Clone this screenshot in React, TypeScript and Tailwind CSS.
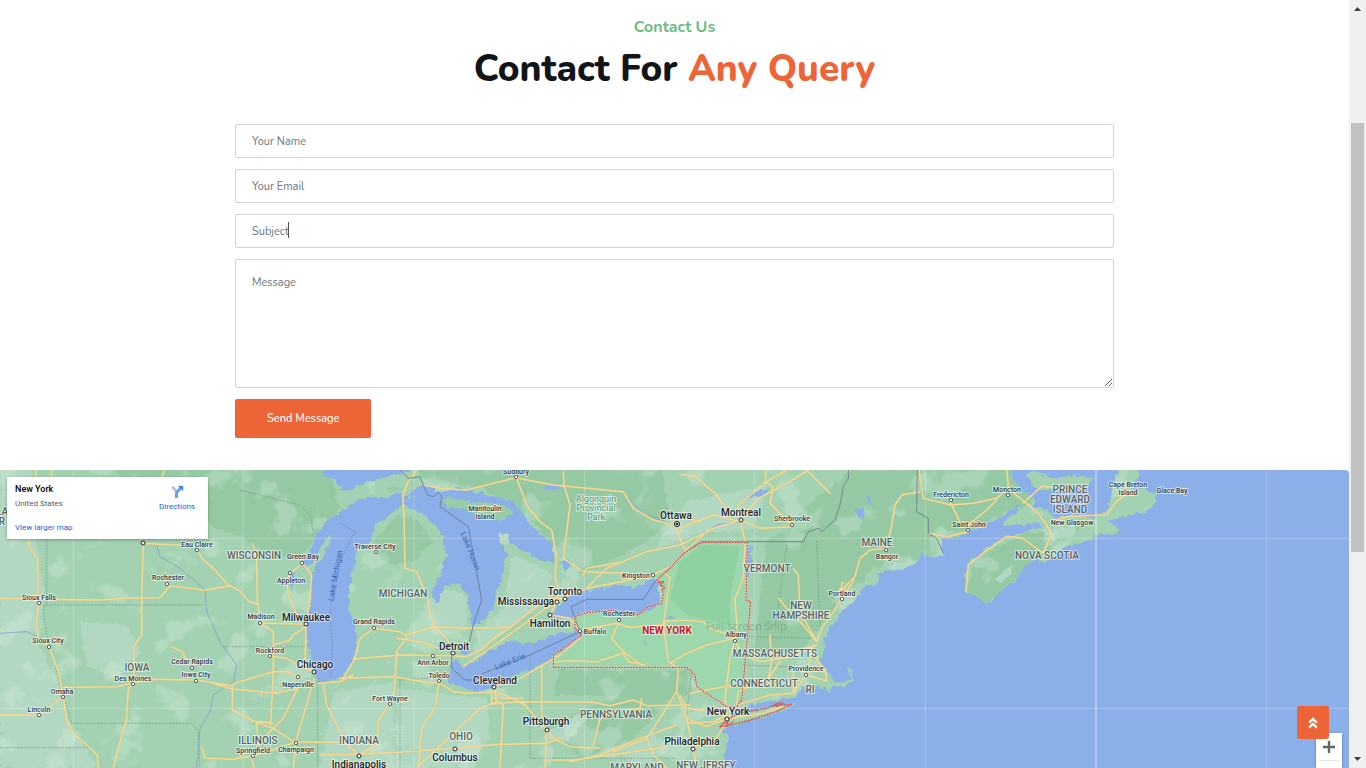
import React from "react";

type Label = [x: number, y: number, text: string];
type Dot = [x: number, y: number];

/* Drawn at three units per map pixel, with its origin at the map's upper left. */
const LAND =
  "M-20 -20L3030 -20L3032 20L3045 54L3080 89L3110 104L3095 130L3140 135L3165 158L3220 150L3280 159L3320 139L3330 99L3365 -20L3425 -20L3405 50L3395 80L3430 72L3470 92L3468 112L3440 139L3380 154L3330 168L3340 180L3365 190L3345 205L3300 210L3260 226L3190 249L3135 294L3100 285L3070 309L3040 350L2990 389L2980 405L2955 417L2935 392L2900 384L2896 329L2915 284L2960 249L3020 214L3060 206L3110 189L3130 179L3060 178L3010 184L3012 169L3050 149L3060 119L3030 139L2980 169L2910 199L2860 219L2820 215L2830 270L2800 279L2765 270L2740 299L2690 318L2660 312L2640 329L2630 364L2600 360L2580 384L2560 409L2525 439L2510 465L2490 489L2470 529L2475 559L2455 584L2490 629L2500 648L2530 650L2552 638L2540 609L2553 615L2558 648L2530 665L2500 663L2490 685L2470 669L2440 664L2425 679L2410 660L2395 685L2380 699L2280 709L2220 734L2210 754L2180 770L2160 794L2185 809L2170 879L2160 920L-20 920Z" +
  "M2170 790L2195 757L2240 745L2310 728L2385 718L2340 738L2270 762L2210 780Z" +
  "M3076 28L3100 18L3130 25L3150 42L3200 32L3285 40L3260 62L3200 82L3140 76L3100 65Z";

const LAKES =
  "M1240 92L1225 95L1210 85L1150 100L1110 95L1060 110L1020 140L985 160L960 195L938 240L925 270L908 294L925 305L950 270L975 225L995 205L985 245L955 290L935 330L930 400L918 480L925 550L945 620L955 650L990 655L1030 630L1060 585L1075 520L1055 450L1045 380L1058 310L1080 250L1105 235L1130 180L1170 150L1205 120Z" +
  "M1235 80L1275 55L1320 80L1370 72L1440 83L1540 110L1575 150L1600 190L1655 235L1665 290L1620 290L1580 260L1550 250L1520 210L1490 200L1520 270L1505 340L1490 400L1470 450L1440 475L1415 480L1405 400L1380 355L1340 360L1310 410L1290 390L1320 330L1338 270L1325 205L1275 150L1210 118Z" +
  "M960 0L970 30L1000 42L1025 75L1060 72L1100 50L1180 32L1230 20L1230 0Z" +
  "M1350 610L1362 585L1390 600L1430 585L1470 560L1520 530L1590 535L1660 510L1720 500L1745 498L1740 520L1700 550L1640 590L1590 615L1540 635L1500 665L1430 680L1375 665L1340 645Z" +
  "M1650 452L1672 430L1700 400L1760 377L1860 360L1900 372L1960 340L1975 355L1980 415L1920 448L1860 445L1800 437L1740 445L1715 460L1680 460Z" +
  "M1380 550L1400 540L1415 560L1390 570ZM1682 290L1710 282L1715 305L1695 320ZM1620 65L1680 58L1690 75L1640 72ZM870 310L885 330L872 380L865 345Z" +
  "M2245 240L2258 240L2252 300L2238 360L2240 290ZM2240 100L2260 82L2310 70L2290 92ZM2570 140L2590 125L2585 165ZM2600 90L2612 105L2620 125L2604 110ZM2690 70L2700 100L2696 105Z" +
  "M1990 457L2025 455L2020 463L1995 464ZM1928 500L1935 520L1945 545L1938 535Z";

const ISLANDS =
  "M1320 100L1360 98L1420 112L1510 120L1545 145L1500 168L1430 158L1395 130L1340 122ZM1170 60L1215 65L1200 80L1160 80Z";

const NEW_YORK =
  "M1725 490L1725 455L1760 443L1840 436L1915 450L1945 425L1985 415L1990 385L1982 350L1970 345L2005 315L2050 265L2105 233L2242 233L2238 405L2252 410L2240 540L2225 705L2210 725L2180 725L2120 685L2090 665L2085 630L2060 607L1660 607L1660 570L1745 510Z";

const LONG_ISLAND =
  "M2160 785L2180 765L2205 750L2240 740L2300 730L2340 712L2350 722L2375 717L2340 735L2270 760L2200 778Z";

const FORESTS =
  "M330 0L960 0L1000 50L1020 130L930 240L900 280L800 260L720 215L640 190L560 110L380 60ZM1240 0L1980 0L2010 160L1940 230L1750 330L1680 270L1590 160L1450 70L1280 50ZM1110 240L1190 150L1260 170L1300 230L1240 290L1160 300ZM1680 615L2060 615L2080 680L1990 710L1800 690L1660 690ZM2300 230L2450 100L2560 15L2760 15L2820 270L2620 310L2480 460L2400 560L2260 560ZM1640 780L1840 700L2010 700L1900 820L1740 880ZM2780 0L3030 0L3100 110L2900 200L2780 190ZM2900 380L2920 290L3060 210L3260 180L3100 290L2960 417Z";

const PLAINS =
  "M0 0L90 0L110 240L130 380L120 540L195 700L220 800L300 909L0 909ZM240 470L380 480L420 560L350 640L260 600ZM1190 670L1460 700L1470 820L1400 909L1190 909ZM1270 420L1350 370L1400 400L1400 500L1300 510ZM1540 270L1650 320L1660 400L1510 500L1420 580L1430 500L1510 430ZM1000 680L1180 650L1180 909L960 909ZM2060 110L2300 60L2260 190L2080 210L1960 260ZM1620 820L1700 760L1780 740L1700 830ZM1850 850L1960 810L2020 850L1900 909ZM3120 195L3230 180L3220 210L3160 225ZM2990 340L3020 310L3040 300L3030 330L3000 355Z";

const ROADS =
  // Plains and western lakes
  "M0 400L110 403L300 405L380 400L480 398L510 362L615 376L690 362L720 378L745 408L775 418L780 474L918 478" +
  "M85 222L90 250L113 280L115 400L110 480L115 520L147 546L175 620L190 695L200 770L220 805L260 840L292 870L295 909" +
  "M430 235L425 400L425 510L403 540L400 655L385 670L380 760L360 830L340 909" +
  "M190 667L350 665L400 653L440 643L590 645L695 662L720 650L820 620L860 620L895 636" +
  "M0 750L118 750L188 696M430 235L480 238L590 242M590 255L610 285L640 310L685 360M760 240L770 290L772 418" +
  "M908 294L872 325L860 345L865 390L890 450M908 294L935 330L930 400L918 478L915 600L942 622" +
  "M780 474L820 500L820 620L812 780M810 573L860 580L900 605L942 622M918 485L880 510L870 525L820 540" +
  "M697 662L697 735L765 770L820 790L885 832L1050 832M640 655L697 672L830 685L895 670M785 680L785 695" +
  "M942 640L905 770L887 832L880 909M895 665L850 760L800 810M755 768L820 775M770 770L775 840L759 872L700 883L615 880L605 845M887 832L759 874M755 880L762 909" +
  "M970 655L980 720L1020 800L1050 850M955 655L1020 650L1060 630M515 545L545 560L575 607M500 0L485 36M100 0L110 36M150 0L157 40" +
  // Michigan, Ohio, southern Ontario
  "M1250 15L1225 50L1208 90L1212 150L1215 310L1250 320L1282 400L1300 485L1340 520L1360 560" +
  "M1020 640L1180 635L1270 650L1320 655L1360 680L1400 685L1480 680M1122 490L1200 500L1220 510L1300 485L1400 490L1530 487" +
  "M1030 640L1065 580L1080 520L1122 490M1060 582L1200 570L1360 572L1400 575L1450 550L1480 520L1520 495L1590 440L1640 400L1696 400M1390 605L1440 570L1520 515L1650 420" +
  "M1220 515L1190 560L1182 690L1135 770L1130 840L1076 870L1020 820M1190 520L1260 530L1330 555" +
  "M1317 655L1305 730L1265 790L1255 909M960 870L1076 868L1200 862L1365 850L1500 838L1640 835L1680 820" +
  "M1483 667L1490 710L1440 730L1365 800L1250 909M1483 680L1540 700L1575 720L1640 795L1660 820L1710 845L1800 850" +
  "M1483 667L1560 640L1620 605L1680 570L1740 520M1625 605L1625 790M1483 700L1510 720L1500 909M1470 718L1560 710L1780 712L1830 722L1900 705L1940 722L2070 720M1475 690L1475 720M1500 700L1570 700" +
  "M1548 35L1580 120L1620 170L1655 195L1670 280L1665 340L1675 370L1670 410L1650 450L1710 460L1740 495" +
  "M1270 60L1320 70L1400 75L1548 38L1660 60L1870 80L1900 130L1960 165L2025 180M1690 20L1692 60L1710 120L1700 200L1690 280L1750 320L1870 325" +
  "M1640 430L1696 395L1760 370L1840 355L1960 330L2010 305L2060 255L2125 195L2222 165M1760 370L1820 310L1940 260L2040 240L2125 200M2025 180L2045 235L2060 260M1870 290L1760 310L1750 330" +
  // New York and Pennsylvania
  "M1740 495L1850 475L1890 487L1990 480L2000 468L2060 466L2110 470L2135 492L2205 515M1855 475L1835 520L1870 560L1925 600M1660 590L1720 587L1790 590L1870 565L1885 590L1935 600" +
  "M1990 325L2010 335L1990 480L2005 590L2035 610L2030 680L2060 760M2010 595L2060 565L2120 540L2205 520M1640 795L1635 909M1710 890L1800 870L1920 820L2030 780M1780 840L1800 760L1840 740L1920 730L1925 700M1640 885L1720 885L1900 860L2000 845M1940 820L1960 870L2000 909M2060 760L2120 785L2170 765M2060 760L2075 830L2090 909M2030 680L1980 760L1940 820L1840 860" +
  // New England and Quebec
  "M2222 165L2280 190L2375 185M2222 165L2275 100L2370 50L2425 15M2222 165L2215 120L2300 50L2360 15M2222 170L2235 230L2230 340L2205 400L2212 500L2205 525L2190 580L2175 700L2182 762" +
  "M2205 530L2230 570L2280 590L2380 575L2450 540M2380 310L2395 330L2400 440L2450 530M2335 400L2360 430L2410 480L2450 530M2450 530L2465 490L2500 440L2525 400L2560 350L2580 280L2610 255L2660 250L2675 180L2685 120L2705 90L2760 80" +
  "M2182 762L2210 720L2310 690L2380 685L2418 628L2440 540M2210 720L2215 680L2305 640L2340 590M2070 685L2170 665L2250 660M2040 28L2090 35L2120 65L2150 90L2180 130M2182 762L2290 745L2370 718M2182 762L2150 820L2080 850M2060 775L2140 770L2182 750M2040 690L2060 730L2182 745M2310 510L2315 590L2305 640M2380 600L2380 680M2350 570L2430 545L2455 580M2420 630L2480 648L2475 615L2440 570M2040 190L2140 150L2222 170M2040 150L2100 170M2425 20L2490 85M2300 15L2295 50L2320 65L2310 115L2375 180M2528 350L2520 380L2560 340" +
  // Maritimes
  "M2755 0L2770 100L2852 120L2920 115L2990 100L3023 70L3110 139L3140 179L3155 209L3130 264L3065 219L3020 214L2950 264L2905 299L2898 380M2785 205L2840 215L2905 200M2905 180L2960 135L2990 105M3150 169L3210 154L3320 149L3350 109L3390 79M3070 114L3125 64L3200 69M2850 110L2870 150L2880 175M3025 70L3020 0";

const BORDERS =
  "M1200 15L1225 40L1260 35L1282 90L1300 95L1315 82L1325 95L1320 125L1405 185L1445 405L1420 480L1408 530M1355 570L1355 610L1395 645L1430 645L1450 625L1590 570L1740 500L1725 460L1713 425L1760 403L1930 403L1965 350L2070 250L2105 230L2410 230L2425 200L2455 190L2465 200L2480 187L2505 165L2520 120L2530 65L2545 40L2545 0M2752 0L2750 140L2785 160L2785 205L2810 220L2830 265";

const STATE_LINES =
  "M140 222L140 420L130 430L140 510L175 640L215 775L575 775L595 800L600 909M130 420L615 420M0 848L270 848L280 860M670 545L920 545M953 650L953 909M720 75L820 100L900 120L930 150L940 200M1200 645L1200 909M1200 645L1350 635M1590 570L1590 880L2020 880M2230 600L2380 605M2245 515L2435 520M2360 240L2345 350L2325 480M2450 230L2460 490M2075 615L2060 750";

const RIVERS =
  "M470 240L480 275L540 310L580 345L615 375L620 440L660 530L710 600L700 650L640 690L630 740L600 790L590 909M0 505L80 500L135 525L150 560M2222 170L2150 180L2080 225M1870 85L1930 145L2025 180";

const majorCities: Label[] = [
  [306, 621, "Milwaukee"], [315, 668, "Chicago"], [359, 768, "Indianapolis"],
  [455, 761, "Columbus"], [454, 650, "Detroit"], [495, 684, "Cleveland"],
  [546, 725, "Pittsburgh"], [550, 627, "Hamilton"], [526, 605, "Mississauga"],
  [565, 595, "Toronto"], [676, 519, "Ottawa"], [741, 516, "Montreal"],
  [728, 715, "New York"], [692, 745, "Philadelphia"],
];

const towns: Label[] = [
  [197, 547, "Eau Claire"], [303, 559, "Green Bay"], [291, 583, "Appleton"],
  [168, 580, "Rochester"], [39, 600, "Sioux Falls"], [48, 643, "Sioux City"],
  [261, 619, "Madison"], [270, 653, "Rockford"], [192, 664, "Cedar Rapids"],
  [196, 677, "Iowa City"], [133, 681, "Des Moines"], [62, 694, "Omaha"],
  [39, 712, "Lincoln"], [298, 687, "Naperville"], [253, 753, "Springfield"],
  [296, 752, "Champaign"], [375, 549, "Traverse City"], [374, 624, "Grand Rapids"],
  [433, 665, "Ann Arbor"], [439, 678, "Toledo"], [390, 701, "Fort Wayne"],
  [516, 474, "Sudbury"], [485, 511, "Manitoulin"], [485, 519, "Island"],
  [636, 578, "Kingston"], [619, 616, "Rochester"], [595, 634, "Buffalo"],
  [736, 637, "Albany"], [792, 521, "Sherbrooke"], [887, 559, "Bangor"],
  [842, 596, "Portland"], [806, 671, "Providence"], [951, 497, "Fredericton"],
  [1007, 492, "Moncton"], [969, 527, "Saint John"], [1072, 525, "New Glasgow"],
  [1128, 487, "Cape Breton"], [1128, 495, "Island"], [1172, 493, "Glace Bay"],
];

const regions: Label[] = [
  [254, 559, "WISCONSIN"], [137, 671, "IOWA"], [258, 744, "ILLINOIS"],
  [359, 744, "INDIANA"], [403, 597, "MICHIGAN"], [461, 740, "OHIO"],
  [616, 718, "PENNSYLVANIA"], [637, 771, "MARYLAND"], [706, 769, "NEW JERSEY"],
  [767, 572, "VERMONT"], [801, 609, "NEW"], [801, 619, "HAMPSHIRE"],
  [775, 657, "MASSACHUSETTS"], [764, 687, "CONNECTICUT"], [810, 693, "RI"],
  [877, 546, "MAINE"], [1047, 559, "NOVA SCOTIA"], [1070, 493, "PRINCE"],
  [1070, 503, "EDWARD"], [1070, 513, "ISLAND"], [2, 515, "LA"], [2, 525, "R"],
];

const parkLabels: Label[] = [
  [596, 502, "Algonquin"], [596, 511, "Provincial"], [596, 520, "Park"],
];

const majorDots: Dot[] = [
  [306, 624], [314, 672], [359, 756], [455, 749], [453, 653], [494, 687],
  [547, 730], [550, 615], [557, 602], [565, 599], [741, 520], [727, 719], [693, 749], [143, 543],
];

const townDots: Dot[] = [
  [197, 550], [302, 563], [290, 573], [167, 584], [39, 603], [49, 647], [260, 623],
  [270, 656], [192, 668], [196, 681], [133, 684], [63, 697], [39, 715], [298, 677],
  [253, 756], [296, 743], [376, 552], [374, 628], [433, 656], [439, 681], [390, 704],
  [516, 477], [653, 575], [619, 620], [580, 631], [735, 641], [792, 525], [886, 550],
  [842, 599], [806, 675], [951, 500], [1008, 495], [968, 530],
];

function Labels({ items, className }: { items: Label[]; className: string }) {
  return (
    <g
      className={className}
      textAnchor="middle"
      stroke="#ffffff"
      strokeOpacity={0.6}
      strokeWidth={2}
      strokeLinejoin="round"
      paintOrder="stroke"
    >
      {items.map(([x, y, text], i) => (
        <text key={i} x={x} y={y}>
          {text}
        </text>
      ))}
    </g>
  );
}

function MapDrawing() {
  return (
    <svg
      className="block h-full w-full bg-[#8bafe9]"
      viewBox="0 470 1349 298"
      preserveAspectRatio="xMidYMin slice"
      role="img"
      aria-label="Map of New York and the north-eastern United States"
    >
      <defs>
        <clipPath id="land">
          <path d={LAND} />
        </clipPath>
        <filter id="coast" x="0" y="0" width="100%" height="100%">
          <feTurbulence type="fractalNoise" baseFrequency="0.05" numOctaves="3" seed="4" />
          <feDisplacementMap in="SourceGraphic" scale="22" xChannelSelector="R" yChannelSelector="G" />
        </filter>
        <filter id="terrain" x="0" y="0" width="100%" height="100%">
          <feTurbulence type="fractalNoise" baseFrequency="0.009" numOctaves="4" seed="11" />
          <feColorMatrix values="0 0 0 0 0.72  0 0 0 0 0.86  0 0 0 0 0.77  10 0 0 0 -5.9" />
        </filter>
      </defs>

      <g transform="translate(0 465) scale(0.333333)">
        <g filter="url(#coast)">
          <path d={LAND} fill="#a3d2b2" />
          <g clipPath="url(#land)">
            <path d={FORESTS} fill="#94c9a4" />
            <path d={PLAINS} fill="#b2d8c1" />
          </g>
        </g>
        <g clipPath="url(#land)">
          <rect y="15" width="4047" height="894" filter="url(#terrain)" opacity="0.3" />
        </g>
        <path d={NEW_YORK} fill="#9cd7ad" />
        <path d="M2105 240L2220 245L2190 390L2190 480L2060 450L2010 400L2040 290Z" fill="#90d1a4" />
        <g filter="url(#coast)">
          <path d={LAKES} fill="#8bafe9" />
          <path d={ISLANDS} fill="#98cba7" />
        </g>

        <path
          d="M220 15V909M729 15V909M1242 15V909M1754 15V909M2264 15V909M2776 15V909M3799 15V909M0 220H4047M0 730H4047"
          fill="none"
          stroke="#ffffff"
          strokeOpacity="0.25"
          strokeWidth="3"
        />
        <path d="M3288 15V909" stroke="#ffffff" strokeOpacity="0.5" strokeWidth="4" />

        <g fill="none" strokeLinejoin="round" strokeLinecap="round">
          <path d={RIVERS} stroke="#7f9fd0" strokeWidth="3" strokeOpacity="0.8" />
          <path d={STATE_LINES} stroke="#6f8f82" strokeWidth="2" strokeDasharray="3 6" />
          <path d={ROADS} stroke="#d3b76a" strokeWidth="6.5" strokeOpacity="0.45" />
          <path d={ROADS} stroke="#f4da96" strokeWidth="4.5" />
          <path d={BORDERS} stroke="#68788a" strokeWidth="2.5" />
          <path
            d="M1020 175L1065 200L1000 330L990 460L998 540L992 640"
            stroke="#6c86bb"
            strokeWidth="2"
            strokeDasharray="5 5"
          />
          <path d={NEW_YORK} stroke="#fbe3e3" strokeOpacity="0.5" strokeWidth="6" />
          <path d={NEW_YORK} stroke="#d5504b" strokeWidth="4" strokeDasharray="3 6" />
          <path d={LONG_ISLAND} stroke="#d5504b" strokeWidth="4" strokeDasharray="3 6" />
          <path
            d="M1975 352L1992 350L1980 360L1995 368L1985 376M2165 780L2185 770L2178 785L2200 770M2320 725L2335 715L2330 725L2350 715"
            stroke="#d5504b"
            strokeWidth="3"
          />
        </g>
      </g>

      <g fill="#ffffff" stroke="#4a4f52" strokeWidth="0.9">
        {townDots.map(([x, y], i) => (
          <circle key={i} cx={x} cy={y} r="1.7" />
        ))}
      </g>
      <g fill="#ffffff" stroke="#202124" strokeWidth="1">
        {majorDots.map(([x, y], i) => (
          <circle key={i} cx={x} cy={y} r="2" />
        ))}
        <circle cx="677" cy="524" r="2.6" />
        <circle cx="677" cy="524" r="1" fill="#202124" />
      </g>

      <Labels items={regions} className="fill-[#566562] font-[Roboto,sans-serif] text-[10px] font-medium" />
      <Labels items={parkLabels} className="fill-[#4f9770] font-[Roboto,sans-serif] text-[9px]" />
      <Labels items={towns} className="fill-[#33393b] font-[Roboto,sans-serif] text-[7px] font-medium" />
      <Labels items={majorCities} className="fill-[#202124] font-[Roboto,sans-serif] text-[10px] font-medium" />
      <Labels items={[[667, 634, "NEW YORK"]]} className="fill-[#c5221f] font-[Roboto,sans-serif] text-[10px] font-bold" />

      <g className="fill-[#3f69b8] font-[Roboto,sans-serif] text-[8px]" textAnchor="middle">
        <text transform="translate(338 576) rotate(-80)">Lake Michigan</text>
        <text transform="translate(468 552) rotate(68)">Lake Huron</text>
        <text transform="translate(511 664) rotate(-22)">Lake Erie</text>
      </g>
      <text x="706" y="630" className="fill-[#567a68] font-['Open_Sans',sans-serif] text-[11px]" opacity="0.4">
        Full-screen Snip
      </text>
    </svg>
  );
}

const fieldClass =
  "block w-full rounded-[2px] border border-[#ced4da] bg-white px-4 text-[11px] text-[#495057] placeholder:text-[#6c757d] focus:outline-none";

function ContactForm() {
  return (
    <form className="flex flex-col items-start gap-[11px]" onSubmit={(e) => e.preventDefault()}>
      <input type="text" aria-label="Your Name" placeholder="Your Name" className={`${fieldClass} h-[34px]`} />
      <input type="email" aria-label="Your Email" placeholder="Your Email" className={`${fieldClass} h-[34px]`} />
      <div className="relative w-full">
        <input type="text" aria-label="Subject" placeholder="Subject" className={`${fieldClass} h-[34px]`} />
        <span className="absolute top-2 left-[53px] h-4 w-px bg-[#495057]" />
      </div>
      <textarea aria-label="Message" placeholder="Message" className={`${fieldClass} h-[129px] resize-y py-[15px]`} />
      <button type="submit" className="rounded-[2px] bg-[#ed6436] px-8 py-[10px] text-[11px] leading-[19px] font-medium text-white">
        Send Message
      </button>
    </form>
  );
}

function MapCard() {
  return (
    <div className="absolute top-[7px] left-[7px] flex w-[201px] justify-between bg-white px-2 pt-[6px] pb-[6px] font-[Roboto,sans-serif] shadow-[0_1px_3px_rgba(0,0,0,0.3)]">
      <div>
        <h3 className="text-[9px] leading-3 font-medium text-black">New York</h3>
        <p className="mt-[3px] text-[8px] leading-3 text-[#5b5b5b]">United States</p>
        <a href="#map" className="mt-3 block text-[8px] leading-[11px] text-[#1a66d2]">
          View larger map
        </a>
      </div>
      <a href="#directions" className="mr-[5px] flex flex-col items-center pt-[2px] text-[8px] leading-3 text-[#1a66d2]">
        <svg className="mb-[3px] h-[13px] w-[13px]" viewBox="0 0 13 13" fill="none" aria-hidden="true">
          <path d="M1.2 1.8L5.4 6.4" stroke="#a5c4f2" strokeWidth="2.8" />
          <path d="M5.5 13V8.7Q5.5 7.4 6.4 6.5L9.6 3.2" stroke="#6a9fe8" strokeWidth="3" />
          <path d="M6.8 0.9H12.2V6.2Z" fill="#4384df" />
        </svg>
        Directions
      </a>
    </div>
  );
}

function PageScrollbar() {
  return (
    <div className="flex w-[17px] shrink-0 flex-col items-center justify-between bg-[#f0f0f0] py-[5px]" aria-hidden="true">
      <svg className="h-[7px] w-[9px]" viewBox="0 0 9 7">
        <path d="M1 6H8L4.5 2Z" fill="#404040" />
      </svg>
      <div className="flex w-[13px] grow flex-col">
        <div className="grow-[111]" />
        <div className="grow-[430] bg-[#c1c1c1]" />
        <div className="grow-[204]" />
      </div>
      <svg className="h-[7px] w-[9px]" viewBox="0 0 9 7">
        <path d="M1 1H8L4.5 5Z" fill="#404040" />
      </svg>
    </div>
  );
}

export default function App() {
  return (
    <div className="flex h-screen overflow-hidden bg-white font-[Nunito,Lato,sans-serif]">
      <main className="flex min-w-0 grow flex-col">
        <section className="mx-auto w-full max-w-[879px] pt-4 pb-8">
          <header className="mb-8 text-center">
            <p className="text-base leading-[22px] font-bold text-[#6dba7f]">Contact Us</p>
            <h1 className="mt-2 text-[37px] leading-[46px] font-extrabold text-[#121518]">
              Contact For <span className="text-[#ed6436]">Any Query</span>
            </h1>
          </header>
          <ContactForm />
        </section>

        <section className="relative min-h-0 grow overflow-hidden rounded-tr-[4px]" id="map">
          <MapDrawing />
          <MapCard />
          <div className="absolute right-[7px] bottom-0 flex h-[35px] w-[26px] flex-col items-center overflow-hidden bg-white shadow-[0_1px_3px_rgba(0,0,0,0.3)]">
            <button type="button" aria-label="Zoom in" className="flex h-[27px] w-full items-center justify-center">
              <svg className="h-3 w-3" viewBox="0 0 12 12" aria-hidden="true">
                <path d="M6 0V12M0 6H12" stroke="#666666" strokeWidth="2.4" />
              </svg>
            </button>
            <span className="h-px w-5 bg-[#e6e6e6]" />
          </div>
          <a
            href="#top"
            aria-label="Back to top"
            className="absolute right-5 bottom-[29px] flex h-[33px] w-8 items-center justify-center rounded-[3px] bg-[#ed6436]"
          >
            <svg className="h-3 w-[10px]" viewBox="0 0 10 12" fill="none" aria-hidden="true">
              <path d="M1.2 5.6L5 2L8.8 5.6M1.2 10.6L5 7L8.8 10.6" stroke="#ffffff" strokeWidth="2.4" />
            </svg>
          </a>
        </section>
      </main>
      <PageScrollbar />
    </div>
  );
}
